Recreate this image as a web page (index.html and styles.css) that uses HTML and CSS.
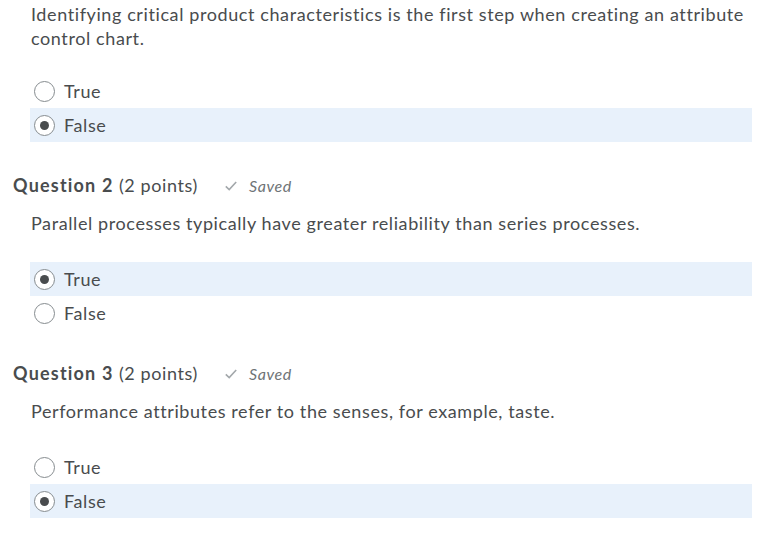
FILE: index.html
```html
<!doctype html>
<html>

<head>
    <title>Quiz</title>
    <link rel="stylesheet" href="styles.css">
</head>

<body>
    <section class="question first">
        <div class="q-text">Identifying critical product characteristics is the first step when creating an attribute control chart.</div>
        <div class="choices">
            <label class="choice"><span class="radio"></span>True</label>
            <label class="choice selected"><span class="radio"></span>False</label>
        </div>
    </section>

    <section class="question">
        <div class="q-head">
            <strong>Question 2</strong> (2 points)<span class="saved"><svg width="12" height="10" viewBox="0 0 12 10"><path d="M0.8 5.4 L4.2 8.6 L11.2 1" /></svg>Saved</span>
        </div>
        <div class="q-text">Parallel processes typically have greater reliability than series processes.</div>
        <div class="choices">
            <label class="choice selected"><span class="radio"></span>True</label>
            <label class="choice"><span class="radio"></span>False</label>
        </div>
    </section>

    <section class="question">
        <div class="q-head">
            <strong>Question 3</strong> (2 points)<span class="saved"><svg width="12" height="10" viewBox="0 0 12 10"><path d="M0.8 5.4 L4.2 8.6 L11.2 1" /></svg>Saved</span>
        </div>
        <div class="q-text">Performance attributes refer to the senses, for example, taste.</div>
        <div class="choices">
            <label class="choice"><span class="radio"></span>True</label>
            <label class="choice selected"><span class="radio"></span>False</label>
        </div>
    </section>
</body>

</html>
```

FILE: styles.css
```css
body,
html {
    margin: 0;
    padding: 0;
    background: #ffffff;
}

* {
    font-family: Lato, "Open Sans", sans-serif;
    box-sizing: border-box;
}

body {
    color: #494c4e;
    font-size: 18px;
    line-height: 24px;
    letter-spacing: 0.6px;
}

.question {
    padding-bottom: 31px;
}

.question.first {
    padding-top: 2px;
}

.q-head {
    padding-left: 13px;
}

.q-head strong {
    font-weight: 700;
    letter-spacing: 1.2px;
}

.saved {
    margin-left: 27px;
    display: inline-flex;
    align-items: center;
    gap: 12px;
    font-size: 16px;
    font-style: italic;
    color: #6e7376;
    vertical-align: 1px;
}

.saved svg path {
    fill: none;
    stroke: #a3a8ab;
    stroke-width: 1.6;
}

.q-text {
    padding-left: 31px;
    padding-right: 20px;
    margin-top: 13px;
}

.first .q-text {
    margin-top: 0;
}

.choices {
    margin: 27px 23px 0 30px;
}

.first .choices {
    margin-top: 24px;
}

.choice {
    height: 34px;
    display: flex;
    align-items: center;
    gap: 9px;
    padding-left: 4px;
}

.choice.selected {
    background: #e8f1fb;
}

.radio {
    width: 21px;
    height: 21px;
    border: 1px solid #868c8f;
    border-radius: 50%;
    background: #ffffff;
    display: flex;
    justify-content: center;
    align-items: center;
}

.selected .radio::after {
    content: "";
    width: 9px;
    height: 9px;
    border-radius: 50%;
    background: #494c4e;
}
```
